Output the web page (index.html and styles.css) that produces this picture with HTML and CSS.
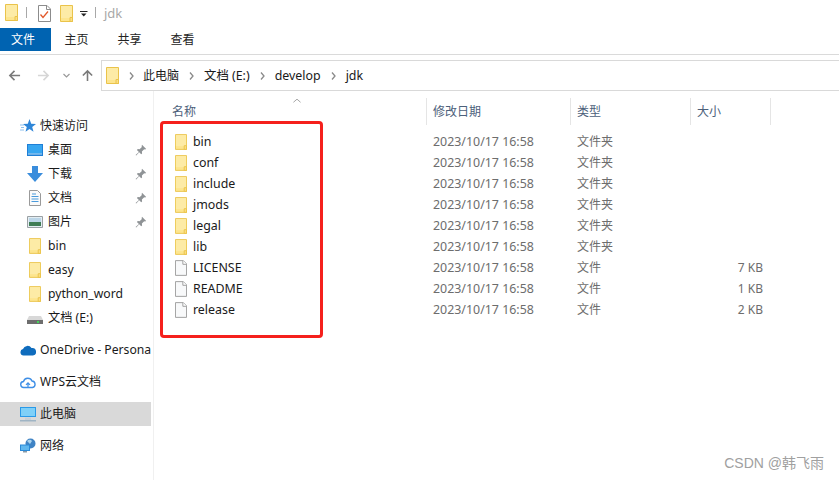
FILE: index.html
```html
<!DOCTYPE html>
<html lang="zh">
<head>
<meta charset="utf-8">
<title>jdk</title>
<link rel="stylesheet" href="styles.css">
</head>
<body>
<svg class="defs" width="0" height="0" aria-hidden="true">
  <symbol id="folder" viewBox="0 0 13 17">
    <path d="M.5.5h12v16H.5z" fill="#fde58e" stroke="#eac34a"/>
    <path d="M1 1h11v12H1z" fill="#fdeba6"/>
    <path d="M10 16.500v-4h2.500v4z" fill="#fbdf84" stroke="#eac34a"/>
  </symbol>
  <symbol id="file" viewBox="0 0 13 17">
    <path d="M.5.5h8.500l3.500 3.500v12.500H.5z" fill="#f8f9fa" stroke="#9a9a9a"/>
    <path d="M8.500.5v4h4" fill="#fff" stroke="#9a9a9a"/>
  </symbol>
  <symbol id="pin" viewBox="0 0 12 12">
    <path d="M7 .8l4.200 4.200-1.200.6-.8-.3-2.300 2.300.2 1.800-.9.900-2-2-3 3.300-.6-.6 3.300-3-2-2 .9-.9 1.800.2 2.300-2.300-.3-.8z" fill="#8f9396"/>
  </symbol>
</svg>

<header class="titlebar">
  <svg class="ti ti-folder"><use href="#folder"/></svg>
  <span class="tsep"></span>
  <svg class="ti ti-check" viewBox="0 0 13 17">
    <path d="M.5.5h8.500l3.500 3.500v12.500H.5z" fill="#fff" stroke="#8c8c8c"/>
    <path d="M8.500.5v4h4" fill="none" stroke="#8c8c8c"/>
    <path d="M2.500 9.500l2.500 3 5-6" fill="none" stroke="#e2582a" stroke-width="1.300"/>
  </svg>
  <svg class="ti ti-folder2"><use href="#folder"/></svg>
  <svg class="ti ti-drop" viewBox="0 0 8 7"><path d="M0 .5h7.500" stroke="#222" fill="none"/><path d="M1 2.500h5.500L3.750 5.500z" fill="#222"/></svg>
  <span class="tsep tsep2"></span>
  <span class="ttl">jdk</span>
</header>

<nav class="tabs">
  <span class="tab tab-file">文件</span>
  <span class="tab">主页</span>
  <span class="tab">共享</span>
  <span class="tab">查看</span>
</nav>

<div class="navbar">
  <div class="navbtns">
    <svg class="nb" viewBox="0 0 14 14"><path d="M13 7H2M7 2L2 7l5 5" fill="none" stroke="#7a7a7a" stroke-width="1.700"/></svg>
    <svg class="nb nb-fwd" viewBox="0 0 14 14"><path d="M1 7h11M7 2l5 5-5 5" fill="none" stroke="#d6d6d6" stroke-width="1.700"/></svg>
    <svg class="nb-down" viewBox="0 0 7 5"><path d="M.5 1l3 3 3-3" fill="none" stroke="#9a9a9a" stroke-width="1.200"/></svg>
    <svg class="nb nb-up" viewBox="0 0 14 14"><path d="M7 13V2M2 7l5-5 5 5" fill="none" stroke="#7a7a7a" stroke-width="1.700"/></svg>
  </div>
  <div class="address">
    <svg class="addr-ic"><use href="#folder"/></svg>
    <svg class="chev chev-first" viewBox="0 0 5 8"><path d="M1 .5l3 3.500-3 3.500" fill="none" stroke="#8a8a8a" stroke-width="1.300"/></svg>
    <span>此电脑</span>
    <svg class="chev" viewBox="0 0 5 8"><path d="M1 .5l3 3.500-3 3.500" fill="none" stroke="#8a8a8a" stroke-width="1.300"/></svg>
    <span class="lat">文档 (E:)</span>
    <svg class="chev" viewBox="0 0 5 8"><path d="M1 .5l3 3.500-3 3.500" fill="none" stroke="#8a8a8a" stroke-width="1.300"/></svg>
    <span class="lat">develop</span>
    <svg class="chev" viewBox="0 0 5 8"><path d="M1 .5l3 3.500-3 3.500" fill="none" stroke="#8a8a8a" stroke-width="1.300"/></svg>
    <span class="lat">jdk</span>
  </div>
</div>

<div class="content">
  <aside class="sidebar">
    <div class="s-row s-top">
      <svg class="s-ic" viewBox="0 0 16 16"><path d="M9.500 1l1.700 4.700 4.800.2-3.800 3 1.300 4.800-4-2.800-4 2.800 1.300-4.800-3.800-3 4.800-.2z" fill="#2f86d8"/><path d="M0 7h4M1 9.500h3M0 12h4" stroke="#8cc0ee"/></svg>
      <span>快速访问</span>
    </div>
    <div class="s-row s-sub">
      <svg class="s-ic2" viewBox="0 0 16 12"><rect width="16" height="12" fill="#1f7fd6"/><path d="M1 1h14v8.500H1z" fill="#37a6f0"/><path d="M1 10h14" stroke="#bde0f8"/></svg>
      <span class="s-t">桌面</span><svg class="pin"><use href="#pin"/></svg>
    </div>
    <div class="s-row s-sub">
      <svg class="s-ic2" viewBox="0 0 16 16"><path d="M5 0h6v7h5l-8 9-8-9h5z" fill="#3a8ddc"/></svg>
      <span class="s-t">下载</span><svg class="pin"><use href="#pin"/></svg>
    </div>
    <div class="s-row s-sub">
      <svg class="s-ic2" viewBox="0 0 16 16"><path d="M2.500.5h8l3 3v12h-11z" fill="#fafafa" stroke="#9a9a9a"/><path d="M5 4h4M4.500 6.500h7M4.500 9h7M4.500 11.500h7" stroke="#4a9bdc"/></svg>
      <span class="s-t">文档</span><svg class="pin"><use href="#pin"/></svg>
    </div>
    <div class="s-row s-sub">
      <svg class="s-ic2" viewBox="0 0 16 16"><path d="M.5 2.500h15v11H.5z" fill="#e4eef3" stroke="#9aa0a4"/><path d="M2 4h12v4H2z" fill="#bcd6e8"/><path d="M2 8h12v4H2z" fill="#3f7d55"/></svg>
      <span class="s-t">图片</span><svg class="pin"><use href="#pin"/></svg>
    </div>
    <div class="s-row s-sub"><svg class="s-fold"><use href="#folder"/></svg><span class="s-t s-lat">bin</span></div>
    <div class="s-row s-sub"><svg class="s-fold"><use href="#folder"/></svg><span class="s-t s-lat">easy</span></div>
    <div class="s-row s-sub"><svg class="s-fold"><use href="#folder"/></svg><span class="s-t s-lat">python_word</span></div>
    <div class="s-row s-sub">
      <svg class="s-ic2" viewBox="0 0 16 16"><path d="M2 6h12l2 4H0z" fill="#d8d8d8"/><path d="M0 10h16v4H0z" fill="#6d6d6d"/><path d="M10 11h2v2h-2z" fill="#43d65a"/></svg>
      <span class="s-t s-lat">文档 (E:)</span>
    </div>
    <div class="s-row s-top s-gap">
      <svg class="s-ic" viewBox="0 0 16 11"><path d="M3.500 11A3.300 3.300 0 0 1 3 4.500 4.800 4.800 0 0 1 11.500 3.500 3.800 3.800 0 0 1 13 11z" fill="#0f6cbd"/></svg>
      <span class="s-lat">OneDrive - Persona</span>
    </div>
    <div class="s-row s-top s-gap">
      <svg class="s-ic" viewBox="0 0 16 13"><path d="M4 12A3 3 0 0 1 3.500 6 4.500 4.500 0 0 1 12 5.500 3.300 3.300 0 0 1 12.500 12z" fill="none" stroke="#3f8fe6" stroke-width="1.400"/><path d="M8 12V7.500M6 9.300l2-2 2 2" fill="none" stroke="#3f8fe6" stroke-width="1.200"/></svg>
      <span>WPS云文档</span>
    </div>
    <div class="s-row s-top s-gap s-sel">
      <svg class="s-ic" viewBox="0 0 16 16"><path d="M0 1h16v10H0z" fill="#2a9ae8"/><path d="M1 2h14v8H1z" fill="#7fd0f8"/><path d="M0 14h16v1.500H0z" fill="#9fb4c4"/><path d="M5 11.500h6V14H5z" fill="#c6d0d8"/></svg>
      <span>此电脑</span>
    </div>
    <div class="s-row s-top s-gap">
      <svg class="s-ic" viewBox="0 0 16 16"><circle cx="10.500" cy="5.500" r="5" fill="#3f83c4"/><path d="M7 3c2-2 4-1 5 0l-2 3z" fill="#a9d3ee"/><path d="M0 6.500h10v6.500H0z" fill="#2a8ad8"/><path d="M1 7.500h8V12H1z" fill="#5fb7ee"/><path d="M3 13h4v1.500H3z" fill="#8a9aa6"/></svg>
      <span>网络</span>
    </div>
  </aside>

  <main class="list">
    <div class="head">
      <div class="col c-name">名称</div>
      <div class="col c-date">修改日期</div>
      <div class="col c-type">类型</div>
      <div class="col c-size">大小</div>
      <svg class="sort" viewBox="0 0 9 5"><path d="M.5 4.500l4-3.500 4 3.500" fill="none" stroke="#9a9a9a"/></svg>
    </div>
    <div class="rows">
      <div class="row"><svg class="r-ic"><use href="#folder"/></svg><span class="r-name">bin</span><span class="r-date">2023/10/17 16:58</span><span class="r-type">文件夹</span><span class="r-size"></span></div>
      <div class="row"><svg class="r-ic"><use href="#folder"/></svg><span class="r-name">conf</span><span class="r-date">2023/10/17 16:58</span><span class="r-type">文件夹</span><span class="r-size"></span></div>
      <div class="row"><svg class="r-ic"><use href="#folder"/></svg><span class="r-name">include</span><span class="r-date">2023/10/17 16:58</span><span class="r-type">文件夹</span><span class="r-size"></span></div>
      <div class="row"><svg class="r-ic"><use href="#folder"/></svg><span class="r-name">jmods</span><span class="r-date">2023/10/17 16:58</span><span class="r-type">文件夹</span><span class="r-size"></span></div>
      <div class="row"><svg class="r-ic"><use href="#folder"/></svg><span class="r-name">legal</span><span class="r-date">2023/10/17 16:58</span><span class="r-type">文件夹</span><span class="r-size"></span></div>
      <div class="row"><svg class="r-ic"><use href="#folder"/></svg><span class="r-name">lib</span><span class="r-date">2023/10/17 16:58</span><span class="r-type">文件夹</span><span class="r-size"></span></div>
      <div class="row"><svg class="r-ic"><use href="#file"/></svg><span class="r-name">LICENSE</span><span class="r-date">2023/10/17 16:58</span><span class="r-type">文件</span><span class="r-size">7 KB</span></div>
      <div class="row"><svg class="r-ic"><use href="#file"/></svg><span class="r-name">README</span><span class="r-date">2023/10/17 16:58</span><span class="r-type">文件</span><span class="r-size">1 KB</span></div>
      <div class="row"><svg class="r-ic"><use href="#file"/></svg><span class="r-name">release</span><span class="r-date">2023/10/17 16:58</span><span class="r-type">文件</span><span class="r-size">2 KB</span></div>
    </div>
    <div class="redbox"></div>
  </main>
</div>
<div class="mark">CSDN @韩飞雨</div>
</body>
</html>
```
FILE: styles.css
```css
* { box-sizing: border-box; }
html, body { height: 100%; }
body {
  margin: 0;
  width: 839px;
  height: 480px;
  overflow: hidden;
  position: relative;
  background: #fff;
  color: #1a1a1a;
  font: 12px/16px "Noto Sans", "Noto Sans CJK SC", sans-serif;
}
.defs { position: absolute; }
.lat { font-size: 12.400px; }
.s-lat { font-size: 12.200px; }

.titlebar { height: 28px; display: flex; align-items: flex-start; padding: 4px 0 0 5px; }
.ti { display: block; flex: none; }
.ti-folder { width: 13px; height: 17px; }
.tsep { width: 1px; height: 11px; margin: 3px 0 0 8px; background: #a8a8a8; }
.ti-check { width: 13px; height: 17px; margin: 1px 0 0 11px; }
.ti-folder2 { width: 13px; height: 17px; margin: 1px 0 0 9px; }
.ti-drop { width: 8px; height: 7px; margin: 7px 0 0 7px; }
.tsep2 { margin: 3px 0 0 7px; }
.ttl { margin: 1px 0 0 8px; color: #a8a8a8; font-size: 13px; }

.tabs { height: 27px; display: flex; border-bottom: 1px solid #dadada; }
.tab { width: 53px; height: 23px; padding-right: 2px; text-align: center; line-height: 23px; color: #222; }
.tab-file { width: 51px; padding: 0 0 0 11px; text-align: left; background: #0063b1; color: #fff; }

.navbar { height: 36px; display: flex; padding-top: 5px; }
.navbtns { width: 101px; display: flex; align-items: center; padding: 0 0 0 8px; height: 31px; }
.nb { width: 13px; height: 13px; flex: none; }
.nb-fwd { margin-left: 16px; }
.nb-down { width: 7px; height: 5px; margin-left: 13px; flex: none; }
.nb-up { margin-left: 11px; }
.address {
  flex: 1;
  height: 31px;
  display: flex;
  align-items: center;
  border: 1px solid #d9d9d9;
  border-right: 0;
  padding-left: 4px;
  color: #1a1a1a;
}
.addr-ic { width: 13px; height: 17px; flex: none; }
.chev { width: 5px; height: 8px; margin: 0 10px; flex: none; }
.chev-first { margin-right: 9px; }

.content { display: flex; height: 389px; }

.sidebar { width: 154px; flex: none; padding-top: 23px; border-right: 1px solid #f0f0f0; padding-right: 2px; }
.s-row { height: 24px; display: flex; align-items: center; white-space: nowrap; overflow: hidden; }
.s-top { padding-left: 20px; }
.s-sub { padding-left: 27px; }
.s-gap { margin-top: 8px; }
.s-sel { background: #d9d9d9; }
.s-ic { width: 16px; height: 16px; margin-right: 4px; flex: none; }
.s-ic2 { width: 16px; height: 16px; margin-right: 5px; flex: none; }
.s-fold { width: 12px; height: 16px; margin: 0 7px 0 2px; flex: none; }
.s-t { flex: 1; }
.pin { width: 12px; height: 12px; margin-right: 4px; flex: none; }

.list { flex: 1; position: relative; min-width: 0; }
.head { height: 40px; display: flex; position: relative; padding-top: 7px; }
.col { height: 27px; line-height: 27px; padding-left: 6px; color: #4c607a; border-right: 1px solid #e5e5e5; flex: none; }
.c-name { width: 273px; padding-left: 18px; }
.c-date { width: 144px; }
.c-type { width: 120px; }
.c-size { width: 80px; }
.sort { position: absolute; left: 139px; top: 7px; width: 8px; height: 5px; }

.row { height: 21px; display: flex; align-items: center; color: #6d6d6d; }
.r-ic { width: 12px; height: 16px; margin-left: 21px; flex: none; }
.r-name { width: 246px; padding-left: 6px; color: #1a1a1a; flex: none; font-size: 12.400px; }
.r-date { width: 144px; flex: none; font-size: 12.400px; }
.r-type { width: 110px; flex: none; }
.r-size { width: 76px; text-align: right; flex: none; }

.redbox {
  position: absolute;
  left: 6px;
  top: 30px;
  width: 163px;
  height: 217px;
  border: 3px solid #f5201c;
  border-radius: 4px;
}
.mark {
  position: absolute;
  right: 15px;
  bottom: 8px;
  color: #a0a0a0;
  font: 14px/18px "Liberation Sans", "Noto Sans CJK SC", sans-serif;
}
```
